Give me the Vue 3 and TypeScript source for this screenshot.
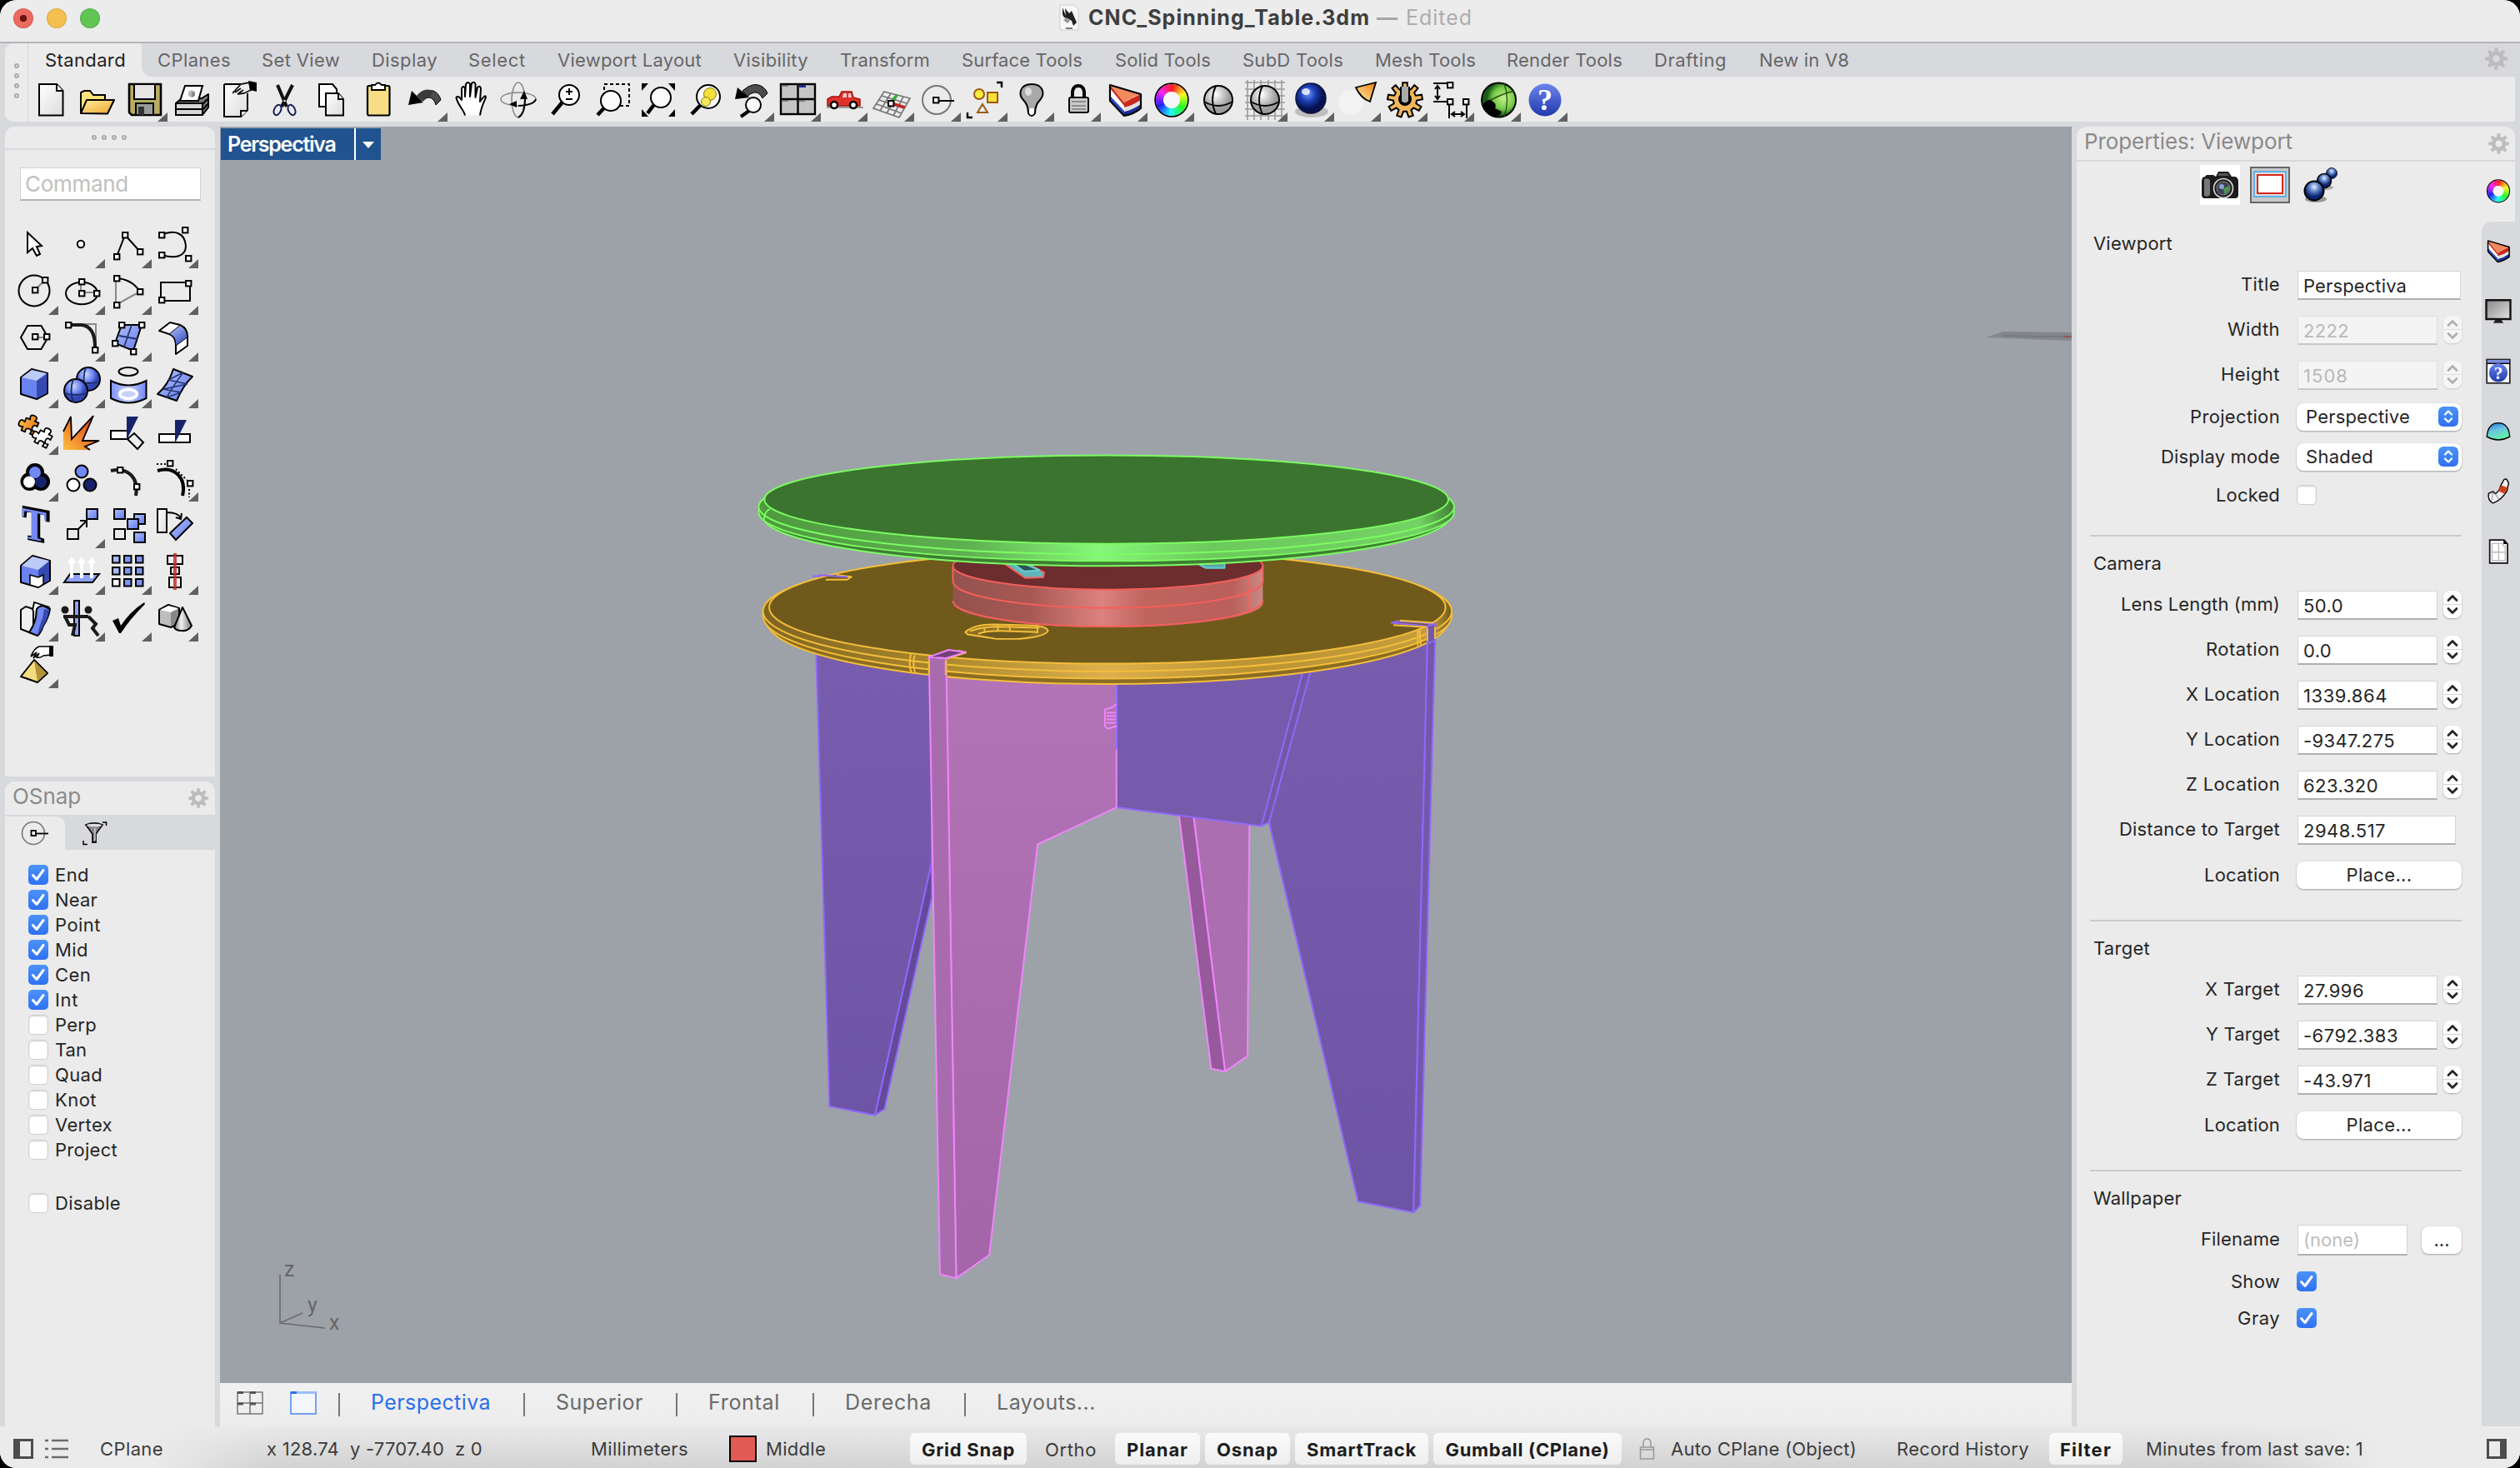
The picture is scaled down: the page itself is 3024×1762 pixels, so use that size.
<script setup lang="ts">
interface Cell { t: string; x: number; w: number }
interface Row {
  label: string
  lw: number
  mt: number
  kind: 'text' | 'step' | 'select' | 'check' | 'button' | 'file'
  value?: string
  vw?: number
  off?: boolean
  on?: boolean
}
interface Section { title: string; w: number; end: number; rows: Row[] }

// Spreads letters so a label occupies its design width.
const vFit = {
  mounted(el: HTMLElement, b: { value: number }) {
    const n = (el.textContent || '').length
    if (!n) return
    const natural = el.getBoundingClientRect().width
    el.style.letterSpacing = ((b.value + 3 - natural) / n).toFixed(3) + 'px'
  },
}

const K = 'stroke="#000" stroke-width="2"'
const sq = (x: number, y: number) => `<rect x="${x - 3}" y="${y - 3}" width="6.4" height="6.4" fill="#fff" ${K}/>`
const box = (x: number, y: number, w: number, h: number, f: string) => `<rect x="${x}" y="${y}" width="${w}" height="${h}" fill="${f}" ${K}/>`

function ring(cx: number, cy: number, r: number, w: number): string {
  let s = `<circle cx="${cx}" cy="${cy}" r="${r + w / 2 + 0.8}" fill="none" stroke="#000" stroke-width="1.8"/>`
  const n = 36
  for (let i = 0; i < n; i++) {
    const a = (i / n) * 2 * Math.PI - Math.PI / 2
    const b = ((i + 1.15) / n) * 2 * Math.PI - Math.PI / 2
    const p = (t: number) => `${(cx + r * Math.cos(t)).toFixed(2)} ${(cy + r * Math.sin(t)).toFixed(2)}`
    s += `<path d="M${p(a)}A${r} ${r} 0 0 1 ${p(b)}" stroke="hsl(${i * 10},95%,55%)" stroke-width="${w}" fill="none"/>`
  }
  return s + `<circle cx="${cx}" cy="${cy}" r="${r - w / 2}" fill="#fff" opacity=".55"/>`
}

function gear(cx: number, cy: number, r1: number, r2: number, n: number): string {
  let d = ''
  for (let i = 0; i < n; i++) {
    const steps: [number, number][] = [[-0.3, r1], [-0.19, r2], [0.19, r2], [0.3, r1]]
    for (const [o, r] of steps) {
      const a = ((i + o) / n) * 2 * Math.PI - Math.PI / 2
      d += `${d ? 'L' : 'M'}${(cx + r * Math.cos(a)).toFixed(2)} ${(cy + r * Math.sin(a)).toFixed(2)}`
    }
  }
  return d + 'Z'
}
const panelGear = `<path fill="#bdbdbd" fill-rule="evenodd" d="${gear(12, 12, 8.5, 12, 8)}M12 8.2A3.8 3.8 0 1 0 12 15.8A3.8 3.8 0 1 0 12 8.2Z"/>`

const wedge = `<path d="M11 10L48 21V38Q40 45 28 47L11 29Z" fill="#fff"/>
<path d="M11 23L28 41V47L11 29Z" fill="#2a48c8"/><path d="M11 10L28 31V35L11 14Z" fill="#c92a1c"/><path d="M28 31Q38 25 48 21V28Q38 35 28 37Z" fill="#c92a1c"/>
<path d="M28 37Q38 35 48 28V33Q38 40 28 42Z" fill="#e2e2e6"/><path d="M28 42Q38 40 48 33V38Q40 45 28 47Z" fill="#1a2f94"/>
<path d="M11 10L48 21Q36 25 28 31Z" fill="#f1895e"/><path d="M11 10L48 21V38Q40 45 28 47L11 29Z" fill="none" stroke="#000" stroke-width="2.2" stroke-linejoin="round"/>`
const glass = (cx: number, cy: number, r: number, hx: number, hy: number) =>
  `<path d="M${cx - r * 0.7} ${cy + r * 0.75}L${hx} ${hy}" stroke="#000" stroke-width="4.5"/><circle cx="${cx}" cy="${cy}" r="${r}" fill="#fbfbfb" ${K}/>`
const swoop = `<path d="M24 26Q28 14 39 17Q46 20 48 28L42 34Q40 26 34 25Q29 25 27 29Z" fill="#4c4c4c" stroke="#000" stroke-width="1"/><path d="M9 34L13 17L27 31Z" fill="#000"/><path d="M19 23Q28 12 39 17L34 25Q29 25 25 29Z" fill="#3a3a3a"/>`

const toolbar: [string, boolean][] = [
  [`<path d="M14 9H35L42.500 17V46.500H14Z" fill="url(#paper)" ${K}/><path d="M35 9V17H42.500" fill="#fff" ${K}/>`, false],
  [`<path d="M8 44V19L12 17H19L23 22H37V28H43" fill="#fbe27a" ${K}/><path d="M8 44L15 28H48L40 44.500Z" fill="url(#folder)" ${K} stroke-linejoin="round"/>`, false],
  [`<path d="M10 9H48V46H13L10 43Z" fill="#b8ac62" stroke="#000" stroke-width="2.6"/><rect x="16" y="9" width="25" height="18" fill="#e4e4e4" ${K}/><rect x="18" y="32" width="21" height="14" fill="#9a9a9a" ${K}/><rect x="21" y="36" width="7" height="10" fill="#333"/>`, true],
  [`<path d="M10 32L17 26H41L49 21V37L42 46H10Z" fill="#777" ${K} stroke-linejoin="round"/><path d="M10 32H42V46H10Z" fill="#d6d6d6" ${K}/><path d="M10 39H42M42 33L48 27M42 40L48 33" ${K}/><path d="M15 29L21 11H42L37 29Z" fill="#fff" ${K}/><path d="M25 18L29 16L33 18V23L29 25L25 23Z" fill="#b8b8b8"/><path d="M29 19L33 18V23L29 25Z" fill="#888"/>`, false],
  [`<path d="M12 9H34V14M40 20V40L32 48H12V9" fill="url(#paper)" ${K}/><path d="M32 48V41H40" fill="#fff" ${K}/><path d="M22 20L32 9L42 7L44 16L36 20L28 21M25 19L32 14M28 21L35 16" fill="#eee" stroke="#111" stroke-width="1.800"/><path d="M41 5L51 7V18L43 16Z" fill="#000"/>`, false],
  [`<path d="M20 10L31 36M38 10L25 36" stroke="#111" stroke-width="4"/><ellipse cx="20" cy="40" rx="4" ry="6.500" fill="none" stroke="#16205c" stroke-width="2" transform="rotate(25 20 40)"/><ellipse cx="37" cy="40" rx="4" ry="6.500" fill="none" stroke="#16205c" stroke-width="2" transform="rotate(-25 37 40)"/><circle cx="28.500" cy="29" r="1.300" fill="#ddd"/>`, false],
  [`<path d="M14 9H30L35 15V36H14Z" fill="#fff" ${K}/><path d="M22 20H37L43 27V46.500H22Z" fill="url(#paper)" ${K}/><path d="M37 20V27H43" fill="#fff" ${K}/>`, false],
  [`<rect x="16" y="11" width="26.500" height="35.500" rx="2" fill="#f6dd86" stroke="#000" stroke-width="2.200"/><path d="M21 16V10H25Q29 5 33 10H37V16Z" fill="#fff" ${K}/>`, false],
  [swoop, true],
  [`<path d="M21 46.500C20 40 12 34 10.500 25Q13 22 17 28V14Q18.500 10 21 14V24L22 9Q25 5 27 9V24L29 8Q32 5 33.500 9V25L36 13Q39 10 40 14L39 30Q46 20 46 25C42 34 40 38 39 46.500" fill="#fff" stroke="#000" stroke-width="2" stroke-linejoin="round"/>`, false],
  [`<ellipse cx="29" cy="28" rx="8" ry="21" fill="none" stroke="#888" stroke-width="1.500"/><ellipse cx="29" cy="27" rx="21" ry="8" fill="none" stroke="#888" stroke-width="1.500"/><path d="M29 49Q37 44 37 27M50 27Q48 34 29 35" fill="none" ${K}/><path d="M31 27L36 17L40 27ZM27 29V37L18 33Z" fill="#000"/>`, false],
  [`${glass(34, 22, 12, 14, 45)}<path d="M34 14V22M30 18H38M30 27H38" ${K}/>`, false],
  [`<rect x="20" y="9" width="30" height="26" fill="none" ${K} stroke-dasharray="4 3"/>${glass(28, 29, 12, 12, 46)}`, false],
  [`${glass(32, 25, 12, 16, 44)}<path d="M9 8H17L9 17ZM41 8H49V17ZM9 39V48H17ZM49 39V48H41Z" fill="#000"/>`, false],
  [`${glass(33, 24, 14, 13, 45)}<circle cx="35" cy="21" r="7.500" fill="#f3e13b" stroke="#8b7a10"/><circle cx="30" cy="30" r="5.500" fill="#f7e85a" stroke="#8b7a10"/>`, false],
  [`<path d="M18 17Q31 5 42 12Q47 16 48 20L42 26Q38 18 32 19Q27 20 24 24Z" fill="#4c4c4c" stroke="#000"/><path d="M9 27L12 13L26 25Z"/><path d="M26 41L16 48" stroke="#000" stroke-width="4"/><circle cx="31" cy="34" r="9" fill="#fbfbfb" ${K}/>`, true],
  [`<rect x="8" y="9" width="41" height="36" fill="#c4c4c4" stroke="#000" stroke-width="2.400"/><path d="M28.500 9V45M8 27H49" stroke="#000" stroke-width="2.400"/><rect x="30" y="10" width="8" height="3" fill="#1a2c8f"/><path d="M10 11H17M10 29H17M30 29H37" stroke="#777" stroke-width="2"/>`, true],
  [`<path d="M7 37H51" stroke="#999" stroke-width="2"/><path d="M8 35V27L13 24H22L25 18H37L39 25L47 27V35Z" fill="#dd3329" stroke="#a81410" stroke-width="1.500"/><path d="M27 20H31V25H26ZM33 20H36L37 25H33Z" fill="#eec8c8"/><circle cx="16" cy="34" r="4" fill="#fff" stroke="#000" stroke-width="2.500"/><circle cx="39" cy="34" r="4" fill="#fff" stroke="#000" stroke-width="2.500"/>`, true],
  [`<path d="M20 18L51 26L38 49L7 38ZM17 23L47 32M14 28L44 38M11 33L41 44M28 20L15 41M36 22L23 44M43 24L31 47" fill="none" stroke="#777" stroke-width="1.700"/><path d="M28 31L35 22" stroke="#2cb52c" stroke-width="3"/><path d="M29 32L45 37" stroke="#c02626" stroke-width="3.500"/>${sq(28, 32)}`, true],
  [`<circle cx="27" cy="28" r="17" fill="none" stroke="#777" stroke-width="2"/><path d="M30 29H48" ${K}/>${sq(26, 28)}`, true],
  [`<circle cx="22" cy="21" r="6" fill="#ffec3d" stroke="#9a5a12" stroke-width="2"/><rect x="32" y="19" width="12" height="12" fill="#ffdf3d" stroke="#9a5a12" stroke-width="2"/><path d="M26 33L32 43H20Z" fill="#eee" stroke="#9a5a12" stroke-width="2"/><path d="M43 7H49V13M8 43V49H14" fill="none" stroke="#000" stroke-width="2.400"/>`, true],
  [`<path d="M29 9C14 9 13 22 19 28C24 33 25 40 25 44Q29 50 33 44C33 40 34 33 39 28C46 20 42 9 29 9Z" fill="#a9a9a9" ${K}/><path d="M26 38H32V44Q29 48 26 44Z" fill="#fff"/><ellipse cx="25" cy="18" rx="4" ry="5" fill="#ddd"/>`, true],
  [`<path d="M22 25V18Q23 11 29 11Q35 11 36 18V25" fill="none" stroke="#000" stroke-width="4"/><rect x="18" y="25" width="23" height="18" rx="2" fill="#c9c9c9" ${K}/><path d="M21 30H38M21 35H38M21 39H38" stroke="#8f8f8f" stroke-width="1.800"/>`, true],
  [wedge, true],
  [ring(29, 28, 14.5, 9), true],
  [`<circle cx="29" cy="28" r="17" fill="url(#pearl)" stroke="#000" stroke-width="2"/><path d="M12 30Q29 40 46 30M26 11Q18 28 26 45" fill="none" stroke="#000" stroke-width="1.800"/>`, false],
  [`<path d="M8 4V52M16 4V52M24 4V52M33 4V52M41 4V52M49 4V52M5 7H53M5 15H53M5 23H53M5 31H53M5 39H53M5 47H53" stroke="#999" stroke-width="1.500"/><circle cx="29" cy="28" r="17" fill="url(#pearl)" stroke="#000" stroke-width="2"/><path d="M12 30Q29 40 46 30M26 11Q18 28 26 45" fill="none" stroke="#000" stroke-width="1.800"/>`, true],
  [`<ellipse cx="29" cy="42" rx="20" ry="7" fill="#aaa" opacity=".7"/><circle cx="28" cy="26" r="18" fill="url(#cobalt)" stroke="#0a123e" stroke-width="1.500"/><ellipse cx="22" cy="18" rx="5" ry="4" fill="#fff" opacity=".8"/>`, true],
  [`<circle cx="20" cy="31" r="15" fill="#f6f6f6" opacity=".7"/><path d="M26 13L50 7L43 30Q32 26 26 13Z" fill="url(#torch)" stroke="#000" stroke-width="1.800"/>`, true],
  [`<path d="${gear(29, 28, 14, 21, 9)}" fill="#f1b75c" stroke="#000" stroke-width="2"/><circle cx="29" cy="27" r="7" fill="#e9e9e9" ${K}/><path d="M24 12V30Q29 35 34 30V12" fill="#aaa" ${K}/>`, true],
  [`<path d="M7 8H26M7 30H26M12 12V26M9 15L12 11L15 15M9 23L12 27L15 23M26 34V50M47 34V50M30 45H43M33 42L29 45L33 48M40 42L44 45L40 48" fill="none" stroke="#000" stroke-width="2"/>${sq(27, 10)}${sq(27, 30)}${sq(46, 30)}`, true],
  [`<circle cx="29.500" cy="28" r="20.500" fill="url(#lime)" stroke="#000" stroke-width="2"/><path d="M36 8Q43 28 36 48M10 34Q28 22 48 17" fill="none" stroke="#234d10" stroke-width="1.300"/><path d="M10 36Q12 28 20 28L24 31Q27 34 25 38L33 42L31 46Q17 50 10 36Z" fill="#000"/>`, true],
  [`<circle cx="29" cy="28" r="19.500" fill="url(#help)"/><text x="29" y="40" text-anchor="middle" font-family="Liberation Serif, serif" font-size="36" font-weight="bold" fill="#fff">?</text>`, true],
]

const ball = (x: number, y: number) =>
  `<circle cx="${x}" cy="${y}" r="14" fill="url(#blueball)" ${K}/><path d="M${x - 13.5} ${y + 3}Q${x} ${y + 7} ${x + 13.5} ${y + 3}M${x - 3} ${y - 14}Q${x - 8} ${y} ${x - 3} ${y + 14}" fill="none" stroke="#1c2a63" stroke-width="1.800"/>`
const upArrow = (x: number) => `<path d="M${x - 2} 36V18H${x - 5.2}L${x} 10L${x + 5.2} 18H${x + 2}V36Z" fill="#fff"/>`
// One jigsaw piece around the origin: two tabs, two sockets.
const piece = (x: number, y: number, a: number, f: string) =>
  `<path transform="translate(${x} ${y}) rotate(${a})" d="M-8 -8H-3Q-6 -14 0 -14Q6 -14 3 -8H8V-3Q3 -5 3 0Q3 5 8 3V8H3Q5 3 0 3Q-5 3 -3 8H-8V3Q-14 6 -14 0Q-14 -6 -8 -3Z" fill="${f}" stroke="#000" stroke-width="1.800" stroke-linejoin="round"/>`

const tools: [string, boolean][] = [
  [`<path d="M19 13V37L25 32L30 41L34 39L30 30L36 29Z" fill="#fff" ${K}/>`, false],
  [`<circle cx="27" cy="27" r="4.200" fill="#fff" ${K}/>`, true],
  [`<path d="M14 42L24 16L42 36" fill="none" ${K}/>${sq(24, 16)}${sq(14, 42)}${sq(42, 36)}`, true],
  [`<path d="M12 16C28 9 40 14 41 29C41 42 28 45 12 40" fill="none" ${K}/>${sq(12, 16)}${sq(40, 10)}${sq(12, 40)}${sq(44, 44)}`, true],
  [`<circle cx="27" cy="27" r="18.500" fill="none" ${K}/><path d="M28 26L40 14" stroke="#888" stroke-width="2"/>${sq(28, 26)}${sq(40, 14)}`, true],
  [`<ellipse cx="28" cy="30" rx="19" ry="13.300" fill="none" ${K}/><path d="M27 16V29H46" fill="none" stroke="#888" stroke-width="2"/>${sq(28, 16)}${sq(28, 30)}${sq(46, 30)}`, true],
  [`<path d="M13 12V44L42 28" fill="none" stroke="#888" stroke-width="2"/><path d="M14 12Q32 13 42 28" fill="none" ${K}/>${sq(14, 12)}${sq(42, 28)}${sq(14, 44)}`, true],
  [`${box(11, 17, 35, 22, 'none')}${sq(44, 18)}${sq(12, 38)}`, true],
  [`<path d="M11 27L19 13H35.500L43.500 27L35.500 41H19Z" fill="none" ${K}/><path d="M28 27H42" stroke="#888" stroke-width="2"/>${sq(28, 26)}${sq(42, 26)}`, true],
  [`<path d="M28 11H45V38" fill="none" stroke="#888" stroke-width="2"/><path d="M14 12H28Q44 14 44 38" fill="none" stroke="#1e1a1a" stroke-width="4"/>${sq(12, 12)}${sq(44, 42)}`, true],
  [`<path d="M20 12H44L34 43L12 34Z" fill="url(#blue)" ${K}/><path d="M32 12L23 38M17 25L39 29" stroke="#26346f" stroke-width="1.800"/>${sq(20, 12)}${sq(44, 12)}${sq(12, 34)}${sq(34, 44)}`, true],
  [`<path d="M9 19L22 9L34 12Q43 16 43 26V37L29 47V35Q28 25 21 23Z" fill="#fff" ${K} stroke-linejoin="round"/><path d="M21 23L34 12.500Q43 17 42.500 27L29 37Q29 25 21 23Z" fill="url(#sweep)" stroke="#000" stroke-width="1"/>`, true],
  [`<path d="M11 19L24 9L43 14V38L30 45L11 39Z" fill="#6b83ef" ${K} stroke-linejoin="round"/><path d="M12 19L24 10L42 14L30 23Z" fill="#bccaf8"/><path d="M30 23L42.500 14.500V37.500L30 44.500Z" fill="#3549b0"/>`, true],
  [`${ball(36, 21)}${ball(21, 35)}`, true],
  [`<ellipse cx="28" cy="12" rx="11.500" ry="5" fill="none" ${K}/><path d="M7 23Q28 34 49.500 23V44Q28 55 7 44Z" fill="url(#band)" ${K}/><ellipse cx="28" cy="39" rx="10.500" ry="5.500" fill="#c7d2fb" stroke="#fff" stroke-width="3.500"/>`, true],
  [`<path d="M26 9L49 18Q38 28 30 47L7 39Q20 28 26 9Z" fill="url(#blue)" ${K} stroke-linejoin="round"/><path d="M38 13Q28 26 18 43M20 22L43 27M14 33L35 37M20 22L38 13M14 33L43 27M18 43L35 37" fill="none" stroke="#26346f" stroke-width="1.500"/>`, true],
  [`${piece(22, 22, 22, 'url(#jigsaw)')}${piece(38, 37, 28, '#fff')}`, true],
  [`<path d="M6 28L15 10L16 37L42 9L29 39H49L32 46L38 50H6Z" fill="url(#boom)"/><path d="M6 28L15 10L16 37L42 9L29 39H49L32 46L38 50" fill="none" stroke="#000" stroke-width="1.800"/>`, false],
  [`${box(7, 27, 20, 10, '#fff')}<path d="M35 30L46 41L39 49L27 37Z" fill="#eee" ${K}/><path d="M26 10H40L26 38Z" fill="#16236b"/>`, false],
  [`${box(9, 31, 37, 10, '#fff')}<path d="M28 14H42L28 42Z" fill="#16236b"/>`, false],
  [`<circle cx="28" cy="21" r="11"/><circle cx="21.500" cy="32" r="11"/><circle cx="35" cy="32" r="11"/><circle cx="21" cy="32.500" r="7" fill="#fff"/><circle cx="35" cy="32.500" r="7" fill="#16236b"/><circle cx="28" cy="21" r="7" fill="#7187f2"/>`, true],
  [`<circle cx="28" cy="20" r="7.500" fill="#7187f2" ${K}/><circle cx="18" cy="36" r="7.500" fill="#fff" ${K}/><circle cx="38" cy="36" r="7.500" fill="#16236b" ${K}/>`, false],
  [`<path d="M7 19C28 14 41 28 37 49" fill="none" stroke="#1e1a1a" stroke-width="4"/>${sq(18, 18)}${sq(38, 38)}`, false],
  [`<path d="M7 19C28 13 42 28 37 49" fill="none" stroke="#000" stroke-width="4"/><path d="M6 11H19M29 17L42 30M45 41V51" stroke="#000" stroke-width="2" stroke-dasharray="2 2.500"/>${sq(22, 10)}${sq(46, 34)}`, true],
  [`<g transform="translate(28 46) skewY(11) scale(.84 1)"><text x="1.500" y="0" text-anchor="middle" font-family="Liberation Serif, serif" font-size="56" font-weight="bold" fill="#3a4fc0" stroke="#000" stroke-width="3.500">T</text><text x="-1" y="0" text-anchor="middle" font-family="Liberation Serif, serif" font-size="54" font-weight="bold" fill="#748af3">T</text></g>`, false],
  [`${box(11, 33, 13, 12, '#e9e9e9')}${box(34, 9, 13, 12, 'url(#blue)')}<path d="M24 33L33 24M26 23H34V31" fill="none" ${K}/>`, true],
  [`${box(11, 9, 13, 12, 'url(#blue)')}${box(35, 15, 13, 12, 'url(#blue)')}${box(27, 21, 13, 12, 'url(#blue)')}${box(11, 33, 13, 12, '#e9e9e9')}${box(35, 37, 13, 12, 'url(#blue)')}`, false],
  [`${box(7, 9, 11, 28, 'url(#paper)')}<path d="M42 19L49 26L29 46L22 38Z" fill="url(#blue)" ${K}/><path d="M18 13Q32 13 35 20M29 19L35 21L36 14" fill="none" ${K}/>`, false],
  [`<path d="M11 21L25 9L46 15V39L32 47L11 41Z" fill="#6b83ef" ${K} stroke-linejoin="round"/><path d="M12 21L25 10L45 15L32 26Z" fill="#bccaf8"/><path d="M32 26L45 16V38L32 46Z" fill="#3549b0"/><path d="M22 32L32 35L38 32V43L32 47L22 44Z" fill="#fff" stroke="#000" stroke-width="1.500"/>`, true],
  [`<path d="M14 31H49L41 41H7Z" fill="#8ea2f7" ${K}/>${upArrow(16)}${upArrow(28)}${upArrow(40)}`, true],
  [[9, 23, 37].map((y, r) => [9, 23, 37].map((x, c) => box(x, y, 8.5, 8.5, r === 2 && c === 0 ? '#fff' : c ? '#7f95f4' : '#a9b8f8')).join('')).join(''), true],
  [`${box(19, 9, 18, 10, '#eee')}${box(23, 23, 10, 8, '#eee')}${box(21, 35, 14, 12, '#eee')}<rect x="26" y="6" width="4" height="44" fill="#c0302b" opacity=".85"/>`, true],
  [`<path d="M11 18L17 14L26 17V47L11 41Z" fill="#f0f0f0" ${K}/><path d="M25 19L27 9L46 15" fill="#fff" stroke="#000" stroke-width="1.800"/><path d="M30 17Q33 13 38 13L46 17Q44 28 38 37Q35 46 31 49L21 45Q27 36 29 27Z" fill="#7187f2" ${K}/><path d="M39 17L45 18Q44 28 38 37Q35 45 31 48Q34 35 37 28Z" fill="#3549b0"/>`, true],
  [`${box(19, 7, 6, 42, '#8ea2f7')}<circle cx="8" cy="18" r="4.500" fill="#1e1a1a"/><circle cx="36" cy="18" r="4.500" fill="#1e1a1a"/><path d="M6 26H36M8 26L13 36H20L17 49M36 26L45 35L41 40L48 49" fill="none" stroke="#1e1a1a" stroke-width="4"/><path d="M22 26H30" stroke="#1e1a1a" stroke-width="3"/>`, true],
  [`<path d="M9 31L16 28L19 37Q30 20 47 9L48 11Q30 29 19 46H17Z"/>`, true],
  [`<path d="M9 18L20 12L33 16V34L23 39L9 35Z" fill="#bdbdbd" ${K} stroke-linejoin="round"/><path d="M10 18L20 13L32 16L23 21Z" fill="#fff"/><path d="M23 21L32 17V33L23 38Z" fill="#888"/><path d="M37 15L48 37Q44 44 36 43Q29 43 27 39Z" fill="url(#cone)" ${K} stroke-linejoin="round"/>`, true],
  [`<path d="M23 18Q27 8 33 6H46V16L38 17Q35 20 30 19L33 14L26 20L30 13L23 18" fill="#fff" stroke="#000" stroke-width="1.600"/><path d="M45 5H50V18H45Z"/><path d="M11 42L27 22L43 38L31 49Z" fill="#f5dc81" ${K} stroke-linejoin="round"/><path d="M27 23L42 38L31 48Z" fill="#b49336"/>`, true],
]

const tabs: Cell[] = [
  { t: 'Standard', x: 55, w: 94 }, { t: 'CPlanes', x: 190, w: 85 }, { t: 'Set View', x: 315, w: 91 }, { t: 'Display', x: 447, w: 76 },
  { t: 'Select', x: 563, w: 66 }, { t: 'Viewport Layout', x: 670, w: 170 }, { t: 'Visibility', x: 881, w: 87 }, { t: 'Transform', x: 1009, w: 105 },
  { t: 'Surface Tools', x: 1155, w: 142 }, { t: 'Solid Tools', x: 1339, w: 112 }, { t: 'SubD Tools', x: 1492, w: 118 }, { t: 'Mesh Tools', x: 1651, w: 118 },
  { t: 'Render Tools', x: 1809, w: 136 }, { t: 'Drafting', x: 1986, w: 84 }, { t: 'New in V8', x: 2112, w: 105 },
]
const tabWidth = (i: number) => (i + 1 < tabs.length ? tabs[i + 1].x - tabs[i].x : 130)

const snaps: [string, number, boolean][] = [
  ['End', 38, true], ['Near', 48, true], ['Point', 52, true], ['Mid', 37, true], ['Cen', 40, true], ['Int', 25, true],
  ['Perp', 47, false], ['Tan', 35, false], ['Quad', 54, false], ['Knot', 47, false], ['Vertex', 66, false], ['Project', 72, false],
]

const sections: Section[] = [
  { title: 'Viewport', w: 92, end: 31, rows: [
    { label: 'Title', lw: 44, mt: 16, kind: 'text', value: 'Perspectiva', vw: 121 },
    { label: 'Width', lw: 60, mt: 20, kind: 'step', value: '2222', vw: 52, off: true },
    { label: 'Height', lw: 68, mt: 20, kind: 'step', value: '1508', vw: 51, off: true },
    { label: 'Projection', lw: 105, mt: 16, kind: 'select', value: 'Perspective', vw: 122 },
    { label: 'Display mode', lw: 140, mt: 14, kind: 'select', value: 'Shaded', vw: 78 },
    { label: 'Locked', lw: 74, mt: 12, kind: 'check' },
  ] },
  { title: 'Camera', w: 79, end: 37, rows: [
    { label: 'Lens Length (mm)', lw: 188, mt: 16, kind: 'step', value: '50.0', vw: 45 },
    { label: 'Rotation', lw: 86, mt: 20, kind: 'step', value: '0.0', vw: 31 },
    { label: 'X Location', lw: 110, mt: 20, kind: 'step', value: '1339.864', vw: 98 },
    { label: 'Y Location', lw: 110, mt: 20, kind: 'step', value: '-9347.275', vw: 107 },
    { label: 'Z Location', lw: 110, mt: 20, kind: 'step', value: '623.320', vw: 87 },
    { label: 'Distance to Target', lw: 190, mt: 20, kind: 'text', value: '2948.517', vw: 96 },
    { label: 'Location', lw: 88, mt: 20, kind: 'button', value: 'Place...', vw: 76 },
  ] },
  { title: 'Target', w: 65, end: 37, rows: [
    { label: 'X Target', lw: 87, mt: 16, kind: 'step', value: '27.996', vw: 70 },
    { label: 'Y Target', lw: 86, mt: 20, kind: 'step', value: '-6792.383', vw: 111 },
    { label: 'Z Target', lw: 86, mt: 20, kind: 'step', value: '-43.971', vw: 79 },
    { label: 'Location', lw: 88, mt: 20, kind: 'button', value: 'Place...', vw: 76 },
  ] },
  { title: 'Wallpaper', w: 103, end: 0, rows: [
    { label: 'Filename', lw: 92, mt: 16, kind: 'file', value: '(none)', vw: 65 },
    { label: 'Show', lw: 56, mt: 16, kind: 'check', on: true },
    { label: 'Gray', lw: 48, mt: 10, kind: 'check', on: true },
  ] },
]

const sideIcons: string[] = [
  ring(29, 28, 14, 9.5),
  wedge,
  `<path d="M8 9H50V42H8Z" fill="url(#screen)" stroke="#111" stroke-width="3.500"/><path d="M24 43H34L38 49H20Z" fill="#222"/>`,
  `<rect x="9" y="8" width="40" height="41" fill="#fff" stroke="#222" stroke-width="2.500"/><rect x="10" y="9" width="38" height="6" fill="#7c8be0"/><path d="M9 15H49" ${K}/><circle cx="29" cy="31" r="16" fill="url(#help)"/><text x="29" y="42" text-anchor="middle" font-family="Liberation Serif, serif" font-size="31" font-weight="bold" fill="#fff">?</text>`,
  `<path d="M9 38Q11 14 29 14Q47 14 49 38Q29 49 9 38Z" fill="url(#dome)" ${K}/>`,
  `<path d="M39 8L43 7L47 14L44 28Q34 44 20 49Q10 45 12 32L20 29L24 33Q31 28 33 19Z" fill="#f0f0f0" ${K} stroke-linejoin="round"/><path d="M34 18L45 22L40 33L29 28Z" fill="#cf3f18"/><path d="M20 30L17 46M24 33L30 43" stroke="#999" stroke-width="1.500"/>`,
  `<path d="M14 9H39L45 16V49H14Z" fill="#fff" stroke="#111" stroke-width="2.500"/><path d="M38 9V16H45Z"/><path d="M18 15H37V19H41V45H18ZM29.500 15V45M18 30H41" fill="none" stroke="#bbb" stroke-width="2"/>`,
]

const views: { t: string; w: number }[] = [
  { t: 'Perspectiva', w: 141 }, { t: 'Superior', w: 102 }, { t: 'Frontal', w: 83 }, { t: 'Derecha', w: 101 }, { t: 'Layouts...', w: 116 },
]
const pills: { t: string; w: number; cell: number; on: boolean }[] = [
  { t: 'Grid Snap', w: 109, cell: 140, on: true }, { t: 'Ortho', w: 59, cell: 94, on: false }, { t: 'Planar', w: 71, cell: 102, on: true },
  { t: 'Osnap', w: 71, cell: 102, on: true }, { t: 'SmartTrack', w: 129, cell: 160, on: true }, { t: 'Gumball (CPlane)', w: 194, cell: 226, on: true },
]
</script>

<template>
  <div class="screen">
    <svg class="defs" width="0" height="0">
      <defs>
        <linearGradient id="paper" x1="0" y1="0" x2="1" y2="1"><stop offset="0" stop-color="#fff" /><stop offset="1" stop-color="#dcdcdc" /></linearGradient>
        <linearGradient id="folder" x1="0" y1="0" x2="1" y2="1"><stop offset="0" stop-color="#fff0a0" /><stop offset="1" stop-color="#eda32c" /></linearGradient>
        <linearGradient id="blue" x1="0" y1="0" x2="1" y2="1"><stop offset="0" stop-color="#b4c3fa" /><stop offset="1" stop-color="#5d77ee" /></linearGradient>
        <linearGradient id="sweep" x1="0" y1="0" x2=".6" y2="1"><stop offset="0" stop-color="#b9c7fb" /><stop offset="1" stop-color="#3d54c4" /></linearGradient>
        <linearGradient id="band"><stop offset="0" stop-color="#7c92f5" /><stop offset=".5" stop-color="#c3cffb" /><stop offset="1" stop-color="#7187f2" /></linearGradient>
        <linearGradient id="jigsaw"><stop offset="0" stop-color="#f9bd45" /><stop offset="1" stop-color="#ea7a1a" /></linearGradient>
        <linearGradient id="boom" x1="0" y1="1" x2="1" y2="0"><stop offset="0" stop-color="#fbc13f" /><stop offset="1" stop-color="#dd2a12" /></linearGradient>
        <linearGradient id="cone"><stop offset="0" stop-color="#777" /><stop offset=".4" stop-color="#f2f2f2" /><stop offset="1" stop-color="#777" /></linearGradient>
        <linearGradient id="torch" x1="0" y1="1" x2="1" y2="0"><stop offset="0" stop-color="#fff3b0" /><stop offset="1" stop-color="#ee7d0a" /></linearGradient>
        <linearGradient id="help" x1="0" y1="0" x2="0" y2="1"><stop offset="0" stop-color="#6c84ea" /><stop offset="1" stop-color="#2139ae" /></linearGradient>
        <linearGradient id="screen" x1="0" y1="0" x2="1" y2="1"><stop offset="0" stop-color="#888" /><stop offset="1" stop-color="#e2e2e2" /></linearGradient>
        <linearGradient id="dome" x1="0" y1="0" x2=".4" y2="1"><stop offset="0" stop-color="#1f6ad0" /><stop offset=".5" stop-color="#6cc4e0" /><stop offset="1" stop-color="#63f0a8" /></linearGradient>
        <radialGradient id="pearl" cx=".4" cy=".3"><stop offset="0" stop-color="#fff" /><stop offset="1" stop-color="#9d9d9d" /></radialGradient>
        <radialGradient id="cobalt" cx=".4" cy=".35"><stop offset="0" stop-color="#6f9bf5" /><stop offset=".5" stop-color="#1b3fb8" /><stop offset="1" stop-color="#06114d" /></radialGradient>
        <radialGradient id="lime" cx=".65" cy=".45"><stop offset="0" stop-color="#c4f48c" /><stop offset=".65" stop-color="#74c848" /><stop offset="1" stop-color="#1d5a18" /></radialGradient>
        <radialGradient id="blueball" cx=".4" cy=".3"><stop offset="0" stop-color="#cdd8fd" /><stop offset=".6" stop-color="#6f87f0" /><stop offset="1" stop-color="#3146b4" /></radialGradient>
        <radialGradient id="prop" cx=".5" cy=".3"><stop offset="0" stop-color="#e6f0ff" /><stop offset=".5" stop-color="#5f83c6" /><stop offset="1" stop-color="#0b2470" /></radialGradient>
      </defs>
    </svg>

    <div class="window">
      <header class="titlebar">
        <div class="lights"><i class="red"></i><i class="amber"></i><i class="green"></i></div>
        <div class="doc">
          <svg width="24" height="32" viewBox="0 0 24 32"><path d="M1 1H18L23 6V31H1Z" fill="#f7f7f7" stroke="#ccc" /><path d="M4 4L8 14L7 5L12 11L15 8L18 15L21 22L17 26L15 20L10 17Q5 17 4 12Z" fill="#222" /><path d="M5 19L9 16L13 20L10 23Z" fill="#999" /><path d="M8 29H16" stroke="#777" stroke-width="2" /></svg>
          <b v-fit="335">CNC_Spinning_Table.3dm</b><span v-fit="24" class="dash">—</span><span v-fit="77" class="edited">Edited</span>
        </div>
      </header>

      <div class="ribbon">
        <div class="grip"><i v-for="n in 4" :key="n"></i></div>
        <div class="ribbon-main">
          <div class="tabs">
            <div class="tab-active"><span v-fit="94">Standard</span></div>
            <div class="tab-rest">
              <div v-for="(t, i) in tabs.slice(1)" :key="t.t" class="tab" :style="{ width: tabWidth(i + 1) + 'px' }"><span v-fit="t.w">{{ t.t }}</span></div>
            </div>
            <svg class="gear" width="27" height="27" viewBox="0 0 24 24" v-html="panelGear"></svg>
          </div>
          <div class="toolbar">
            <div v-for="(ic, i) in toolbar" :key="i" class="slot" :class="{ more: ic[1] }"><svg width="56" height="54" viewBox="0 0 56 54" v-html="ic[0]"></svg></div>
          </div>
        </div>
      </div>

      <div class="work">
        <aside class="left">
          <section class="panel tools">
            <div class="dots"><i v-for="n in 4" :key="n"></i></div>
            <div class="command"><span v-fit="121">Command</span></div>
            <div class="tool-grid">
              <div v-for="(ic, i) in tools" :key="i" class="slot" :class="{ more: ic[1] }"><svg width="56" height="56" viewBox="0 0 56 56" v-html="ic[0]"></svg></div>
            </div>
          </section>
          <section class="panel osnap">
            <div class="osnap-head"><span v-fit="79">OSnap</span><svg width="24" height="24" viewBox="0 0 24 24" v-html="panelGear"></svg></div>
            <div class="osnap-tabs">
              <div class="osnap-on"><svg width="72" height="40" viewBox="0 0 72 40"><circle cx="34" cy="20" r="13.500" fill="none" stroke="#777" stroke-width="1.600" /><path d="M34 20.500H52" stroke="#000" stroke-width="1.800" /><rect x="31.500" y="17" width="5.500" height="6" fill="#fff" stroke="#000" stroke-width="1.800" /></svg></div>
              <div class="osnap-off"><svg width="70" height="40" viewBox="0 0 70 40"><path d="M25 10Q35 6 45 10L37 21V31H33V21Z" fill="#888" stroke="#111" stroke-width="1.800" /><ellipse cx="35" cy="10.500" rx="9" ry="1.800" fill="#ddd" /><path d="M36 14V29" stroke="#ccc" stroke-width="1.500" /><path d="M45 7H49.500V11M22 29V33.500H27" fill="none" stroke="#000" stroke-width="1.500" /></svg></div>
            </div>
            <div class="snaps">
              <div v-for="s in snaps" :key="s[0]" class="snap">
                <i class="check" :class="{ on: s[2] }"><svg v-if="s[2]" width="24" height="24" viewBox="0 0 24 24"><path d="M5.500 12.500L10 17.500L18 6.500" /></svg></i><span v-fit="s[1]">{{ s[0] }}</span>
              </div>
              <div class="snap disable"><i class="check"></i><span v-fit="76">Disable</span></div>
            </div>
          </section>
        </aside>

        <main class="center">
          <div class="viewport">
            <svg class="scene" viewBox="264 152 2222 1508">
              <defs>
                <linearGradient id="gRim"><stop offset="0" stop-color="#4d9a3e" /><stop offset=".3" stop-color="#5fb050" /><stop offset=".49" stop-color="#86f779" /><stop offset=".65" stop-color="#6cc95c" /><stop offset=".95" stop-color="#74d264" /><stop offset="1" stop-color="#3f7d33" /></linearGradient>
                <linearGradient id="oRim"><stop offset="0" stop-color="#7d6420" /><stop offset=".25" stop-color="#a9852c" /><stop offset=".5" stop-color="#dcb04c" /><stop offset=".7" stop-color="#bb9333" /><stop offset=".97" stop-color="#c49d3d" /><stop offset="1" stop-color="#6f5a1b" /></linearGradient>
                <linearGradient id="rSide"><stop offset="0" stop-color="#93524f" /><stop offset=".25" stop-color="#a75853" /><stop offset=".48" stop-color="#dd827f" /><stop offset=".62" stop-color="#c0645e" /><stop offset=".9" stop-color="#ba5f5a" /><stop offset="1" stop-color="#c98984" /></linearGradient>
                <linearGradient id="violet" x1="0" y1="0" x2="0" y2="1"><stop offset="0" stop-color="#785dae" /><stop offset="1" stop-color="#6e54a5" /></linearGradient>
                <linearGradient id="orchid" x1="0" y1="0" x2="0" y2="1"><stop offset="0" stop-color="#b274b6" /><stop offset="1" stop-color="#a365a8" /></linearGradient>
              </defs>
              <path d="M2383 405L2404 398L2486 399V409Z" fill="#83878b" /><path d="M2404 403L2486 404.500" stroke="#74777a" stroke-width="1.500" /><path d="M2476 404H2486" stroke="#a04648" stroke-width="1.500" />
              <g class="model" transform="translate(880 520) scale(.57398 .66327)">
                <g stroke="#9068fb">
                  <path d="M415 775V840L316 1223L296 1234Z" fill="#634a99" />
                  <path d="M173 395H415V775L296 1234L201 1218Z" fill="url(#violet)" />
                </g>
                <g stroke="#ef85fb">
                  <path d="M962 690L1079 700L1075 1127L1028 1155Z" fill="#ab6fb0" />
                  <path d="M931 685L961 685L1028 1155L999 1150Z" fill="#95599c" />
                </g>
                <g stroke="#9068fb">
                  <path d="M1215 400L1452 350L1422 1410L1306 1390L1120 704Z" fill="url(#violet)" />
                  <path d="M1452 350L1468 345L1436 1398L1422 1410Z" fill="#7358aa" />
                  <path d="M801 440L1200 400L1190 434L1104 711L801 677Z" fill="#765bac" stroke="none" />
                  <path d="M1190 434L1207 430L1120 704L1104 711Z" fill="#7058a6" />
                  <path d="M801 677L1104 711" fill="none" />
                </g>
                <path d="M445 420L801 440V677L636 744L535 1487L466 1529Z" fill="url(#orchid)" stroke="#ef85fb" />
                <path d="M801 450V573" stroke="#9068fb" fill="none" />
                <path d="M801 490L792 496L777 500V530L782 535L801 530M780 506H800M780 512H800M780 518H800M780 524H800" fill="none" stroke="#ef85fb" />

                <g stroke="#f4be3b">
                  <ellipse cx="782" cy="340" rx="712" ry="114" fill="#8a6c22" />
                  <ellipse cx="782" cy="330" rx="720" ry="114" fill="url(#oRim)" />
                  <ellipse cx="782" cy="322" rx="720" ry="109" fill="url(#oRim)" />
                  <ellipse cx="782" cy="315" rx="707" ry="102" fill="#6f5a1c" />
                  <path d="M485 360Q502 346 545 346L630 348Q654 350 658 357Q654 368 600 372H550L490 364Z" fill="#8a6f25" />
                  <path d="M512 364Q530 356 570 358L632 360Q610 370 590 371H550Z" fill="#6f5a1c" stroke="none" />
                  <path d="M495 358Q520 350 555 350L640 352M525 350V358M553 347V357M578 347V357M636 349V362M512 363Q530 357 570 358L636 360" fill="none" />
                  <path d="M371 400Q366 418 372 433M379 402Q374 418 380 434M1437 352Q1433 365 1438 384M1431 354V385" fill="none" />
                  <path d="M193 265L238 265L247 260L215 256M448 408L486 397L470 393" fill="none" />
                </g>
                <path d="M166 259L190 257L238 260M180 255V261" stroke="#9068fb" fill="none" />
                <path d="M409 405L445 407L466 1529L432 1522Z" fill="#a86cae" stroke="#ef85fb" />
                <path d="M409 405L450 392L486 396L445 407Z" fill="#70407a" stroke="#ef85fb" />
                <path d="M409 411V436M444 411V438" stroke="#f4be3b" fill="none" />
                <path d="M1450 348L1468 344L1467 376L1451 380Z" fill="#7358aa" stroke="#9068fb" />
                <path d="M1376 343L1392 340L1466 345L1450 349Z" fill="#6f5a1c" stroke="#9068fb" /><path d="M1380 347L1450 351M1394 339L1464 343M1467 350V372M1451 352V376" stroke="#f4be3b" fill="none" />

                <g stroke="#f35f5b">
                  <path d="M459 240V308A324 43 0 0 0 1107 308V240Z" fill="url(#rSide)" stroke="none" />
                  <ellipse cx="783" cy="240" rx="324" ry="43" fill="#6b2d2d" />
                  <path d="M459 240V268M1107 240V270M459 268A324 48 0 0 0 1107 268M459 303A324 47 0 0 0 1107 303M1076 258V322" fill="none" />
                </g>
                <path d="M555 229L600 229L650 252L648 261L610 262Z" fill="#62b5bb" stroke="#f35f5b" /><path d="M580 233L600 233L640 248L608 250Z" fill="#2d5054" stroke="#5fd0d4" />
                <path d="M962 232H1027V244H988Z" fill="#5aa5a8" stroke="#5fd0d4" />

                <g stroke="#7cfb62">
                  <ellipse cx="780" cy="150" rx="718" ry="90" fill="#3f7d33" />
                  <ellipse cx="780" cy="143" rx="727" ry="88" fill="url(#gRim)" />
                  <ellipse cx="780" cy="133" rx="727" ry="86" fill="url(#gRim)" />
                  <ellipse cx="780" cy="120" rx="715" ry="80" fill="#3b742f" />
                  <path d="M76 137Q64 142 64 160" fill="none" />
                </g>
              </g>
              <path d="M336 1530V1588L390 1594M336 1588L363 1576" fill="none" stroke="#6b6b6b" stroke-width="1.600" />
              <text x="341" y="1532">z</text><text x="369" y="1575">y</text><text x="395" y="1596">x</text>
            </svg>
            <div class="vp-title"><b v-fit="143">Perspectiva</b><i></i></div>
          </div>
          <div class="view-tabs">
            <svg width="32" height="30" viewBox="0 0 32 30"><path d="M1 2H31V28H1ZM16 2V28M1 15H31" fill="none" stroke="#777" stroke-width="1.500" /><path d="M1 2.500H8M16 2.500H23M1 16H8M16 16H23" stroke="#555" stroke-width="3" /></svg>
            <svg class="single" width="32" height="30" viewBox="0 0 32 30"><rect x="1" y="2" width="30" height="26" fill="#f3f6fb" stroke="#4a86ef" stroke-width="1.500" /><path d="M1 2.500H31" stroke="#9dbef8" stroke-width="3" /><path d="M1 2.500H8" stroke="#2f6fe6" stroke-width="3" /></svg>
            <template v-for="(v, i) in views" :key="v.t"><i class="bar"></i><span v-fit="v.w" :class="{ cur: i === 0 }">{{ v.t }}</span></template>
          </div>
        </main>

        <aside class="right">
          <div class="prop-head"><span v-fit="247">Properties: Viewport</span><svg width="25" height="25" viewBox="0 0 24 24" v-html="panelGear"></svg></div>
          <div class="prop-body">
            <div class="form">
              <div class="modes">
                <svg class="cam" width="48" height="48" viewBox="0 0 48 48"><path d="M2 20Q2 14 6 14L8 12H16L19 14L22 8H34L38 14H42Q46 15 46 20V36Q46 40 42 40H6Q2 40 2 36Z" fill="#1c1c1c" /><path d="M5 17Q9 15 12 18V36Q9 39 5 37Z" fill="#777" /><path d="M23 10H33L35 13H21Z" fill="#555" /><circle cx="28" cy="28" r="11.500" fill="#222" stroke="#d8d8d8" stroke-width="1.600" /><circle cx="28" cy="28" r="8" fill="#3a4254" stroke="#888" /><path d="M28 28L35 25Q36 33 29 35Z" fill="#4f9152" /><circle cx="26" cy="26" r="3" fill="#8aa0d0" /></svg>
                <svg width="48" height="48" viewBox="0 0 48 48"><rect x="1" y="3" width="46" height="42" fill="#c9c9c9" stroke="#666" stroke-width="2" /><rect x="5" y="8" width="38" height="30" fill="#ddd" stroke="#5fb0e8" stroke-width="2" /><rect x="9" y="12" width="30" height="22" fill="#fff" stroke="#d9291c" stroke-width="2" /></svg>
                <svg width="48" height="48" viewBox="0 0 48 48"><ellipse cx="19" cy="41" rx="13" ry="4" fill="#999" /><ellipse cx="31" cy="27" rx="9" ry="3" fill="#aaa" /><circle cx="38" cy="10" r="6.500" fill="url(#prop)" stroke="#223" /><circle cx="29" cy="19" r="8.500" fill="url(#prop)" stroke="#000" stroke-width="1.500" /><circle cx="17" cy="31" r="11.500" fill="url(#prop)" stroke="#000" stroke-width="2" /></svg>
              </div>
              <template v-for="(s, k) in sections" :key="s.title">
                <div class="heading" :class="{ first: k === 0 }"><span v-fit="s.w">{{ s.title }}</span></div>
                <div v-for="r in s.rows" :key="r.label" class="row" :class="'k-' + r.kind" :style="{ marginTop: r.mt + 'px' }">
                  <div class="label"><span v-fit="r.lw">{{ r.label }}</span></div>
                  <div v-if="r.kind === 'text' || r.kind === 'step' || r.kind === 'file'" class="input" :class="{ off: r.off, dist: r.label.startsWith('Dist') }"><span v-fit="r.vw">{{ r.value }}</span></div>
                  <div v-if="r.kind === 'step'" class="stepper" :class="{ off: r.off }"><svg width="22" height="32" viewBox="0 0 22 32"><path d="M6 11.500L11 6.500L16 11.500M6 21.500L11 26.500L16 21.500" /></svg></div>
                  <div v-if="r.kind === 'select'" class="select"><span v-fit="r.vw">{{ r.value }}</span><i><svg width="24" height="24" viewBox="0 0 24 24"><path d="M8 9.500L12 5.500L16 9.500M8 14.500L12 18.500L16 14.500" /></svg></i></div>
                  <i v-if="r.kind === 'check'" class="check" :class="{ on: r.on }"><svg v-if="r.on" width="24" height="24" viewBox="0 0 24 24"><path d="M5.500 12.500L10 17.500L18 6.500" /></svg></i>
                  <div v-if="r.kind === 'button'" class="button"><span v-fit="r.vw">{{ r.value }}</span></div>
                  <div v-if="r.kind === 'file'" class="button browse">...</div>
                </div>
                <div v-if="s.end" class="rule" :style="{ marginTop: s.end + 'px' }"></div>
              </template>
            </div>
            <nav class="side">
              <div v-for="(ic, i) in sideIcons" :key="i" class="side-tab" :class="{ sel: i === 0 }"><svg width="40" height="40" viewBox="0 0 58 58" v-html="ic"></svg></div>
            </nav>
          </div>
        </aside>
      </div>

      <footer class="status">
        <i class="pane"></i>
        <svg class="list" width="30" height="28" viewBox="0 0 30 28"><path d="M1 4H5M9 4H29M1 14H5M9 14H29M1 24H5M9 24H29" stroke="#6c6c6c" stroke-width="2.500" /></svg>
        <div class="s-cplane"><span v-fit="73">CPlane</span></div>
        <div class="s-coord"><span v-fit="256">x 128.74&nbsp; y -7707.40&nbsp; z 0</span></div>
        <div class="s-unit"><span v-fit="114">Millimeters</span></div>
        <i class="swatch"></i>
        <div class="s-layer"><span v-fit="69">Middle</span></div>
        <div class="pills"><div v-for="p in pills" :key="p.t" class="pill" :class="{ on: p.on }" :style="{ width: p.cell + 'px' }"><span v-fit="p.w">{{ p.t }}</span></div></div>
        <svg class="lock" width="19" height="28" viewBox="0 0 19 28"><path d="M5 12V7Q5 2 9.500 2Q14 2 14 7V12M1.500 12H17.500V26H1.500ZM1.500 15H17.500" fill="none" stroke="#999" stroke-width="1.500" /></svg>
        <div class="s-auto"><span v-fit="220">Auto CPlane (Object)</span></div>
        <div class="s-rec"><span v-fit="156">Record History</span></div>
        <div class="pill on filter"><span v-fit="59">Filter</span></div>
        <div class="s-min"><span v-fit="258">Minutes from last save: 1</span></div>
        <i class="pane end"></i>
      </footer>
    </div>
  </div>
</template>

<style>
body { margin: 0; background: #000; }
</style>

<style scoped>
.screen { width: 3024px; height: 1762px; background: #000; overflow: hidden; font-family: Inter, "Liberation Sans", sans-serif; font-size: 22px; color: #262626; }
.screen * { box-sizing: border-box; }
.defs { position: absolute; }
svg { display: block; flex: none; }
span, b { display: inline-block; white-space: pre; flex: none; }
.window { width: 3024px; height: 1762px; border-radius: 20px; overflow: hidden; background: #d8d9dd; display: flex; flex-direction: column; }

.titlebar { height: 52px; flex: none; background: #ececec; border-bottom: 2px solid #b4b4b8; display: flex; }
.lights { display: flex; gap: 16px; padding: 10px 0 0 16px; }
.lights i { width: 24px; height: 24px; border-radius: 50%; border: 1px solid rgba(0, 0, 0, .12); }
.lights .red { background: radial-gradient(circle, #6b1410 0 4px, #ed6a5e 4.500px); }
.lights .amber { background: #f4bf4f; }
.lights .green { background: #61c554; }
.doc { display: flex; align-items: center; height: 41px; margin-left: 1151px; font-size: 25px; color: #3e3e3e; }
.doc b { margin-left: 11px; font-weight: 700; }
.doc .dash { margin-left: 8px; color: #a5a5a5; font-weight: 700; }
.doc .edited { margin-left: 8px; color: #adadad; }

.ribbon { height: 94px; flex: none; display: flex; padding-left: 6px; }
.grip { width: 27px; background: #ebebeb; border-radius: 10px 0 0 10px; display: flex; flex-direction: column; align-items: center; padding-top: 24px; gap: 6px; }
.grip i, .dots i { width: 6px; height: 6px; border-radius: 50%; border: 2px solid #aaa; }
.ribbon-main { width: 2984px; margin-left: 1px; }
.tabs { height: 40px; display: flex; background: #ebebeb; position: relative; color: #666; }
.tab-active { width: 136px; border-radius: 0 12px 0 0; background: #ebebeb; color: #1f1f1f; padding: 6px 0 0 20px; line-height: 28px; }
.tab-rest { flex: 1; background: #d8d9dd; border-radius: 0 0 0 12px; display: flex; padding: 6px 0 0 19px; }
.tab { line-height: 28px; flex: none; }
.tabs .gear { position: absolute; right: 9px; top: 5px; }
.toolbar { height: 54px; display: flex; background: #ebebeb; border-radius: 0 0 4px 0; }
.toolbar .slot { margin-left: -1px; margin-right: 1px; }
.slot { position: relative; width: 56px; flex: none; }
.slot svg { overflow: visible; }
.slot.more::after { content: ""; position: absolute; right: 0; bottom: 0; width: 12px; height: 11px; background: #616161; clip-path: polygon(100% 0, 100% 100%, 0 100%); }

.work { height: 1566px; flex: none; display: flex; padding: 6px 0 0 6px; }
.left { width: 252px; display: flex; flex-direction: column; gap: 6px; }
.panel { background: #ebebeb; border-radius: 12px 12px 0 0; }
.tools { height: 780px; flex: none; }
.dots { height: 28px; border-bottom: 2px solid #d8d9dd; display: flex; justify-content: center; align-items: center; gap: 6px; padding-right: 2px; }
.command { width: 217px; height: 40px; margin: 21px 0 0 18px; background: #fff; border: 1px solid #d3d3d3; border-bottom: 2px solid #b3b3b3; font-size: 26px; line-height: 37px; color: #c0c0c0; padding-left: 5px; }
.tool-grid { margin: 25px 0 0 8px; display: grid; grid-template-columns: repeat(4, 56px); grid-auto-rows: 56px; }
.osnap { flex: 1; }
.osnap-head { height: 40px; display: flex; justify-content: space-between; padding: 0 8px 0 9px; font-size: 26px; line-height: 36px; color: #8a8a8a; }
.osnap-head svg { margin-top: 8px; }
.osnap-tabs { height: 42px; display: flex; border-top: 2px solid #d8d9dd; background: #d8d9dd; }
.osnap-on { width: 72px; background: #ebebeb; border-radius: 0 10px 0 0; }
.osnap-off { flex: 1; }
.snaps { padding: 15px 0 0 28px; }
.snap { height: 30px; display: flex; align-items: center; gap: 8px; }
.snap.disable { margin-top: 34px; }
.check { width: 24px; height: 24px; flex: none; border-radius: 5px; background: #fff; border: 1px solid #cfcfcf; box-shadow: inset 0 1px 2px rgba(0, 0, 0, .18); display: block; }
.check.on { background: linear-gradient(#4b93f8, #2f71f3); border: 0; box-shadow: none; }
.check path { fill: none; stroke: #fff; stroke-width: 3; stroke-linecap: round; stroke-linejoin: round; }

.center { width: 2222px; margin-left: 6px; display: flex; flex-direction: column; }
.viewport { height: 1508px; background: #9da2a9; position: relative; }
.scene { width: 2222px; height: 1508px; }
.scene text { font-family: Roboto, sans-serif; font-size: 25px; fill: #666; }
.model * { vector-effect: non-scaling-stroke; }
.model { stroke-width: 2; stroke-linejoin: round; }
.vp-title { position: absolute; left: 1px; top: 2px; display: flex; height: 38px; color: #fff; font-size: 25px; line-height: 38px; background: #fff; }
.vp-title b { width: 160px; padding-left: 8px; background: #20538f; font-weight: 600; }
.vp-title i { width: 30px; margin-left: 2px; background: #20538f; padding: 16px 0 0 8px; }
.vp-title i::before { content: ""; display: block; width: 0; border: 7px solid transparent; border-top: 8px solid #fff; border-bottom: 0; }
.view-tabs { height: 52px; background: linear-gradient(#f1f1f1, #ececec); display: flex; padding: 9px 0 0 20px; font-size: 25px; line-height: 29px; color: #6a6a6a; }
.view-tabs .single { margin-left: 32px; }
.view-tabs .bar { width: 2px; height: 28px; margin: 3px 37px 0 39px; background: #777; }
.view-tabs .single + .bar { margin-left: 26px; }
.view-tabs .cur { color: #2c6fe8; }

.right { width: 526px; margin-left: 6px; border-radius: 12px 12px 0 0; background: #ebebeb; }
.prop-head { height: 42px; border-bottom: 2px solid #d8d9dd; display: flex; justify-content: space-between; padding: 0 7px 0 9px; font-size: 26px; line-height: 36px; color: #8a8a8a; }
.prop-head svg { margin-top: 8px; }
.prop-body { display: flex; height: 1518px; }
.form { width: 486px; }
.modes { display: flex; gap: 12px; height: 56px; padding: 4px 0 0 148px; }
.cam { background: #fff; }
.heading { height: 34px; line-height: 34px; margin-top: 15px; padding-left: 20px; }
.heading.first { margin-top: 25px; }
.row { height: 34px; display: flex; align-items: center; }
.label { width: 245px; margin-right: 19px; text-align: right; line-height: 34px; flex: none; }
.k-text .label, .k-step .label, .k-file .label { margin-top: -2px; }
.input { margin-left: 1px; height: 35px; width: 196px; border: 1px solid #d4d4d4; border-bottom: 2px solid #b0b0b0; background: #fff; line-height: 34px; padding-left: 6px; }
.label span { margin-right: 1px; }
.k-step .input { width: 168px; }
.k-file .input { width: 132px; height: 37px; color: #bdbdbd; }
.input.dist { width: 190px; }
.input.off { background: #f4f4f4; border-color: #e0e0e0; border-bottom-color: #c8c8c8; color: #b9b9b9; }
.stepper { width: 22px; height: 33px; margin: -2px 0 0 7px; border-radius: 8px; background: linear-gradient(#fff 0 48%, #d3d3d3 48% 53%, #fff 53%); box-shadow: 0 1px 2px rgba(0, 0, 0, .3); }
.stepper path { fill: none; stroke: #262626; stroke-width: 2.800; stroke-linecap: round; stroke-linejoin: round; }
.stepper.off { background: linear-gradient(#f5f5f5 0 48%, #ddd 48% 53%, #f5f5f5 53%); box-shadow: 0 1px 2px rgba(0, 0, 0, .15); }
.stepper.off path { stroke: #b0b0b0; }
.select, .button { width: 198px; height: 33px; border-radius: 8px; background: #fff; box-shadow: 0 1px 2px rgba(0, 0, 0, .3), 0 0 1px rgba(0, 0, 0, .2); line-height: 33px; }
.select { display: flex; justify-content: space-between; align-items: center; padding: 0 4px 0 11px; }
.select i { width: 24px; height: 24px; border-radius: 6px; background: linear-gradient(#4b93f8, #2f71f3); }
.select path { fill: none; stroke: #fff; stroke-width: 2.300; stroke-linecap: round; stroke-linejoin: round; }
.button { text-align: center; }
.browse { width: 48px; margin-left: 17px; }
.rule { height: 2px; width: 446px; margin-left: 16px; background: #cbcbcb; }
.side { width: 40px; background: #d8d9dd; display: flex; flex-direction: column; }
.side-tab { height: 72px; display: flex; align-items: center; background: #d8d9dd; }
.side-tab.sel { background: #ebebeb; border-radius: 0 0 12px 0; }
.side { background: linear-gradient(#ebebeb 90px, #d8d9dd 90px); }
.side-tab.sel { box-shadow: none; }
.side-tab:nth-child(2) { border-radius: 12px 0 0 0; }

.status { height: 50px; flex: none; display: flex; align-items: center; color: #3c3c3c; background: linear-gradient(90deg, #ebebeb 180px, rgba(235, 235, 235, 0) 320px, rgba(235, 235, 235, 0) 2680px, #ebebeb 2860px), linear-gradient(#e9e9e9, #d2d2d2); line-height: 54px; }
.status > * { flex: none; margin-top: 4px; }
.pane { width: 24px; height: 24px; margin-left: 16px; border: 3px solid #4c4c4c; border-left-width: 8px; }
.pane.end { border-left-width: 3px; border-right-width: 8px; margin-left: 0; }
.list { margin-left: 13px; }
.s-cplane { margin-left: 37px; width: 200px; }
.s-coord { width: 389px; }
.s-unit { width: 166px; }
.swatch { width: 33px; height: 32px; border: 2px solid #000; background: #e15b54; }
.s-layer { width: 184px; padding-left: 11px; }
.pills { display: flex; gap: 6px; }
.pill { height: 38px; border-radius: 6px; line-height: 41px; text-align: center; }
.pill.on { background: linear-gradient(#fafafa, #eee); color: #1d1d1d; font-weight: 700; }
.lock { margin-left: 21px; }
.s-auto { margin-left: 19px; width: 271px; }
.s-rec { width: 183px; }
.filter { width: 88px; }
.s-min { margin-left: 28px; width: 409px; }
</style>
